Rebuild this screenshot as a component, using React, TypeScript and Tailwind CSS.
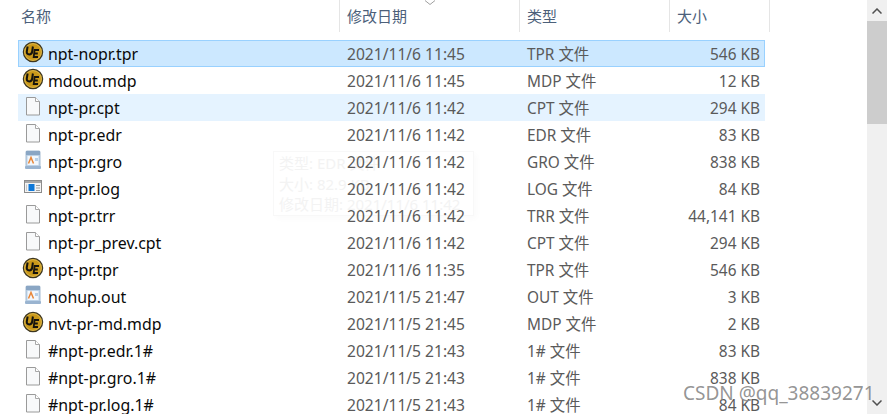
import React from "react";

const UE = () => (
  <svg width="22" height="22" viewBox="0 0 22 22" className="shrink-0 -translate-y-[1px] overflow-visible">
    <circle cx="12" cy="11" r="9.6" fill="#c9981a" stroke="#3d3620" strokeWidth="1.3" />
    <circle cx="12" cy="11" r="8.4" fill="none" stroke="#e6c45a" strokeWidth="0.7" />
    <path d="M6.6 5.5 L5.8 10.5 Q5.5 13.4 8.3 13.4 Q10.8 13.4 11.2 10.5 L11.9 5.5" fill="none" stroke="#15130e" strokeWidth="2" />
    <path d="M18 9 H13.6 L12.7 16 H17 M13.2 12.5 H16.8" fill="none" stroke="#15130e" strokeWidth="1.8" />
  </svg>
);

const Doc = () => (
  <svg width="22" height="22" viewBox="0 0 22 22" className="shrink-0">
    <path d="M5.5 1.5 H14.5 L18.5 5.5 V19 H5.5 Z" fill="#f8f9fa" stroke="#9a9a9a" />
    <path d="M14.5 1.5 V5.5 H18.5" fill="#fff" stroke="#a8a8a8" />
  </svg>
);

const Gro = () => (
  <svg width="22" height="22" viewBox="0 0 22 22" className="shrink-0">
    <rect x="5" y="1" width="14" height="17" rx="1" fill="#bcd2e8" stroke="#a6bcd2" />
    <rect x="5" y="1" width="14" height="4" fill="#8aa6c4" />
    <rect x="6.5" y="6" width="11" height="9" fill="#f2f7fc" />
    <path d="M7.5 13.5 L10 7.5 L12.5 13.5" fill="none" stroke="#e8873a" strokeWidth="1.5" />
    <rect x="14" y="8" width="3" height="3" fill="#b8d0e8" />
    <rect x="4" y="16" width="16" height="3" rx="1" fill="#9ab4d0" />
  </svg>
);

const Log = () => (
  <svg width="22" height="22" viewBox="0 0 22 22" className="shrink-0">
    <rect x="3.5" y="3.5" width="17" height="12" fill="#f4f4f4" stroke="#8c8c8c" />
    <rect x="4" y="4" width="16" height="2" fill="#a8a8a8" />
    <rect x="7.5" y="7" width="6" height="7" fill="#0f78d8" />
    <path d="M15 8.5 H19 M15 11 H19 M15 13.5 H19" stroke="#a0a0a0" />
    <path d="M5.5 7.5 V14" stroke="#c8c8c8" />
  </svg>
);

type Row = { name: string; date: string; type: string; size: string; icon: React.ReactNode; cls?: string };

const rows: Row[] = [
  { name: "npt-nopr.tpr", date: "2021/11/6 11:45", type: "TPR 文件", size: "546 KB", icon: <UE />, cls: "bg-[#cce8ff] outline outline-1 -outline-offset-1 outline-[#99d1ff]" },
  { name: "mdout.mdp", date: "2021/11/6 11:45", type: "MDP 文件", size: "12 KB", icon: <UE /> },
  { name: "npt-pr.cpt", date: "2021/11/6 11:42", type: "CPT 文件", size: "294 KB", icon: <Doc />, cls: "bg-[#e5f3ff]" },
  { name: "npt-pr.edr", date: "2021/11/6 11:42", type: "EDR 文件", size: "83 KB", icon: <Doc /> },
  { name: "npt-pr.gro", date: "2021/11/6 11:42", type: "GRO 文件", size: "838 KB", icon: <Gro /> },
  { name: "npt-pr.log", date: "2021/11/6 11:42", type: "LOG 文件", size: "84 KB", icon: <Log /> },
  { name: "npt-pr.trr", date: "2021/11/6 11:42", type: "TRR 文件", size: "44,141 KB", icon: <Doc /> },
  { name: "npt-pr_prev.cpt", date: "2021/11/6 11:42", type: "CPT 文件", size: "294 KB", icon: <Doc /> },
  { name: "npt-pr.tpr", date: "2021/11/6 11:35", type: "TPR 文件", size: "546 KB", icon: <UE /> },
  { name: "nohup.out", date: "2021/11/5 21:47", type: "OUT 文件", size: "3 KB", icon: <Gro /> },
  { name: "nvt-pr-md.mdp", date: "2021/11/5 21:45", type: "MDP 文件", size: "2 KB", icon: <UE /> },
  { name: "#npt-pr.edr.1#", date: "2021/11/5 21:43", type: "1# 文件", size: "83 KB", icon: <Doc /> },
  { name: "#npt-pr.gro.1#", date: "2021/11/5 21:43", type: "1# 文件", size: "838 KB", icon: <Doc /> },
  { name: "#npt-pr.log.1#", date: "2021/11/5 21:43", type: "1# 文件", size: "84 KB", icon: <Doc /> },
];

const font = "font-['Noto_Sans','Noto_Sans_CJK_SC',sans-serif]";

export default function App() {
  return (
    <div className={`relative flex h-[414px] w-[887px] overflow-hidden bg-white ${font} text-[15px]`}>
      {/* fading tooltip, drawn beneath the list */}
      <div className="absolute left-[273px] top-[151px] h-[65px] w-[201px] border border-[#f8f8f8] pl-[5px] pt-[1px] text-[15px] leading-[20.5px] text-[#f3f3f3] shadow-[3px_3px_6px_rgba(0,0,0,0.02)]">
        <div className="whitespace-nowrap">类型: EDR 文件</div>
        <div className="whitespace-nowrap">大小: 82.9 KB</div>
        <div className="whitespace-nowrap">修改日期: 2021/11/6 11:42</div>
      </div>
      <div className="relative w-[867px] shrink-0">
        <div className="flex h-[32px] text-[#4c607a]">
          <div className="flex w-[340px] items-start border-r border-[#e5e5e5] pl-[21px] pt-[5px]">名称</div>
          <div className="relative flex w-[180px] items-start border-r border-[#e5e5e5] pl-[7px] pt-[5px]">
            修改日期
            <svg width="12" height="7" viewBox="0 0 12 7" className="absolute left-[84px] top-0">
              <path d="M1 0.5 L6 4.5 L11 0.5" fill="none" stroke="#a0a0a0" />
            </svg>
          </div>
          <div className="flex w-[150px] items-start border-r border-[#e5e5e5] pl-[7px] pt-[5px]">类型</div>
          <div className="flex w-[100px] items-start border-r border-[#e5e5e5] pl-[7px] pt-[5px]">大小</div>
        </div>
        <div className="ml-[18px] mt-[8px] w-[747px]">
          {rows.map((r) => (
            <div key={r.name} className={`flex h-[27px] items-center ${r.cls ?? ""}`}>
              <div className="ml-[3px] flex w-[318px] items-center gap-[5px]">
                {r.icon}
                <span className="pt-[2px] text-[15.9px] text-[#0a0a0a]">{r.name}</span>
              </div>
              <div className="ml-[8px] w-[180px] pt-[2px] text-[15.6px] text-[#5a5a5a]">{r.date}</div>
              <div className="w-[150px] pt-[2px] text-[15.4px] text-[#5a5a5a]">{r.type}</div>
              <div className="w-[83px] whitespace-nowrap pt-[2px] text-right text-[15.4px] text-[#5a5a5a]">{r.size}</div>
            </div>
          ))}
        </div>
      </div>
      <div className="flex w-[20px] flex-col bg-[#f0f0f0]">
        <div className="flex h-[21px] items-center justify-center">
          <svg width="10" height="6" viewBox="0 0 10 6">
            <path d="M0.5 5.5 L5 1 L9.5 5.5" fill="none" stroke="#505050" strokeWidth="1.5" />
          </svg>
        </div>
        <div className="h-[103px] bg-[#cdcdcd]" />
        <div className="flex-1" />
        <div className="flex h-[22px] items-center justify-center">
          <svg width="10" height="6" viewBox="0 0 10 6">
            <path d="M0.5 0.5 L5 5 L9.5 0.5" fill="none" stroke="#505050" strokeWidth="1.5" />
          </svg>
        </div>
      </div>
      {/* watermark */}
      <div className="absolute left-[683px] top-[380px] whitespace-nowrap text-[19px] leading-[26px] text-[#888888]/90">
        CSDN @qq_38839271
      </div>
    </div>
  );
}
